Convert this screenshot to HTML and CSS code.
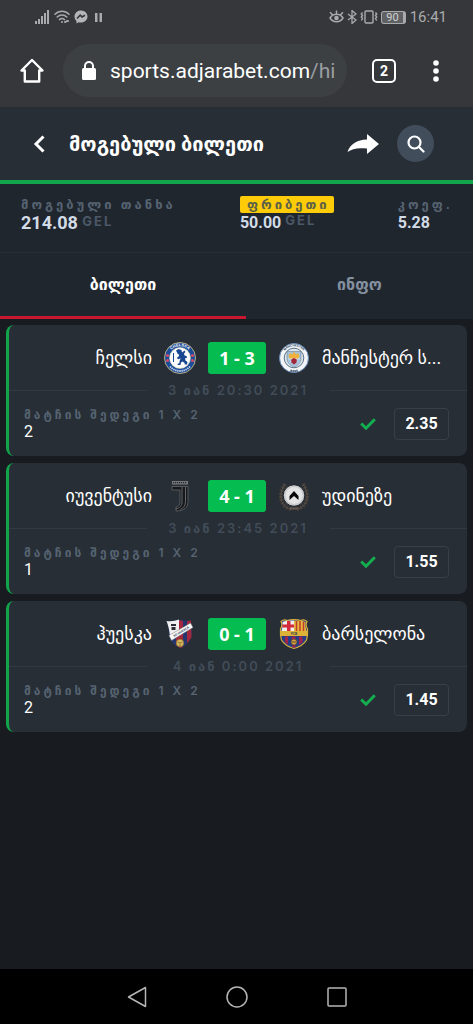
FILE: index.html
```html
<!DOCTYPE html>
<html lang="ka">
<head>
    <meta charset="UTF-8">
    <meta name="viewport" content="width=device-width, initial-scale=1.0">
    <title>მოგებული ბილეთი</title>
    <link rel="stylesheet" href="styles.css">
</head>
<body>
    <div class="status-bar">
        <div class="status-icons">
            <svg width="15" height="14" viewBox="0 0 15 14" fill="#a9aaac">
                <path d="M0 11h2v3H0zM3 9h2v5H3zM6 6h2v8H6zM9 3h2v11H9zM12 0h2v14h-2z"/>
            </svg>
            <svg width="16" height="14" viewBox="0 0 16 14" fill="none" stroke="#a9aaac" stroke-width="1.5" stroke-linecap="round">
                <path d="M1 4.2C5 .2 11 .2 15 4.2M3.200 7C6 4.200 10 4.200 12.800 7M5.500 9.600C7 8.200 9 8.200 10.500 9.600"/>
                <circle cx="8" cy="12" r="1" fill="#a9aaac" stroke="none"/>
                <path d="M11 12h.5M13 11h1" stroke-width="2"/>
            </svg>
            <svg width="14" height="14" viewBox="0 0 14 14">
                <path d="M7 .5C3.200 .5.500 3.200.500 6.600c0 1.800.8 3.400 2 4.500v2.400l2.200-1.200c.7.200 1.500.3 2.300.3 3.800 0 6.500-2.700 6.500-6S10.800.500 7 .500z" fill="#b4b5b7"/>
                <path d="M3 8.500l3.200-3.300 1.900 1.700L11 5.200" fill="none" stroke="#36373b" stroke-width="1.6"/>
            </svg>
            <svg width="16" height="14" viewBox="0 0 16 14" fill="#a9aaac">
                <path d="M3 3h2.500v9H3zM7.500 3H10v9H7.500z"/>
            </svg>
        </div>
        <div class="status-icons status-right">
            <svg width="15" height="14" viewBox="0 0 15 14" fill="none" stroke="#a9aaac" stroke-width="1.500">
                <path d="M1 8c3-5 10-5 13 0-3 5-10 5-13 0zM7.500 4V.5M3.500 4.800L1 2.200M11.500 4.800L14 2.200"/>
                <circle cx="7.500" cy="8" r="2.300" fill="#a9aaac" stroke="none"/>
            </svg>
            <svg width="10" height="14" viewBox="0 0 10 14" fill="none" stroke="#a9aaac" stroke-width="1.300">
                <path d="M1 4l8 6-4 3.500V.5L9 4l-8 6"/>
            </svg>
            <svg width="18" height="14" viewBox="0 0 18 14" fill="none" stroke="#a9aaac" stroke-width="1.400">
                <rect x="5" y="1" width="8" height="12" rx="1"/>
                <path d="M2.500 2.500l-1.200 1.500 1.200 1.500-1.200 1.500 1.200 1.500-1.200 2M15.500 2.500l1.200 1.500-1.200 1.500 1.200 1.500-1.200 1.500 1.200 2"/>
            </svg>
            <span class="battery">90</span>
            <span class="clock">16:41</span>
        </div>
    </div>

    <div class="browser-bar">
        <button class="icon-button" aria-label="Home">
            <svg width="26" height="26" viewBox="0 0 26 26" fill="none" stroke="#fff" stroke-width="2.400" stroke-linejoin="round" stroke-linecap="round">
                <path d="M2.500 12.500L13 2l10.500 10.500h-3.300V23.500H5.800V12.500z"/>
            </svg>
        </button>
        <button class="address">
            <svg width="16" height="20" viewBox="0 0 16 20">
                <rect x="1" y="7" width="14" height="12" rx="1.500" fill="#fff"/>
                <path d="M4 8V5a4 4 0 0 1 8 0v3" fill="none" stroke="#fff" stroke-width="2"/>
            </svg>
            <span class="url">sports.adjarabet.com<span class="url-path">/hi</span></span>
        </button>
        <button class="tab-count" aria-label="Open tabs">2</button>
        <button class="icon-button" aria-label="More">
            <svg width="8" height="24" viewBox="0 0 8 24" fill="#fff">
                <circle cx="4" cy="4" r="2.800"/>
                <circle cx="4" cy="12" r="2.800"/>
                <circle cx="4" cy="20" r="2.800"/>
            </svg>
        </button>
    </div>

    <header class="header">
        <button class="icon-button" aria-label="Back">
            <svg width="12" height="18" viewBox="0 0 12 18" fill="none" stroke="#fff" stroke-width="3">
                <path d="M10.500 1.500L3 9l7.500 7.500"/>
            </svg>
        </button>
        <h1>მოგებული ბილეთი</h1>
        <button class="icon-button" aria-label="Share">
            <svg width="32" height="20" viewBox="0 0 32 20" fill="#fff">
                <path d="M20 0l12 10-12 10v-5.500C11 13.500 5 14.500 .5 18 3 10 10 6 20 5.500z"/>
            </svg>
        </button>
        <button class="search-button" aria-label="Search">
            <svg width="18" height="18" viewBox="0 0 18 18" fill="none" stroke="#fff" stroke-width="2.200" stroke-linecap="round">
                <circle cx="7.500" cy="7.500" r="6"/>
                <path d="M12 12l4.500 4.500"/>
            </svg>
        </button>
    </header>

    <section class="summary">
        <div class="summary-item">
            <div class="label">მოგებული თანხა</div>
            <div class="amount amount-large">214.08 <span class="currency">GEL</span></div>
        </div>
        <div class="summary-item">
            <div class="label freebet">ფრიბეთი</div>
            <div class="amount">50.00 <span class="currency">GEL</span></div>
        </div>
        <div class="summary-item">
            <div class="label">კოეფ.</div>
            <div class="amount">5.28</div>
        </div>
    </section>

    <nav class="tabs">
        <button class="tab active">ბილეთი</button>
        <button class="tab">ინფო</button>
    </nav>

    <main class="matches">
        <article class="match">
            <div class="teams">
                <span class="team home">ჩელსი</span>
                <svg class="crest" viewBox="0 0 32 32">
                    <path id="ring" d="M4.200 16a11.800 11.800 0 0 1 23.600 0" fill="none"/>
                    <circle cx="16" cy="16" r="15.500" fill="#1b4c9a" stroke="#b8ad86"/>
                    <circle cx="16" cy="16" r="10.500" fill="#fff" stroke="#c8c8b0" stroke-width=".6"/>
                    <text class="crest-text"><textPath href="#ring" startOffset="50%">CHELSEA</textPath></text>
                    <circle cx="3.500" cy="13.500" r="1.500" fill="#d84a68"/>
                    <circle cx="3.500" cy="18.500" r="1.500" fill="#d84a68"/>
                    <circle cx="28.500" cy="13.500" r="1.500" fill="#d84a68"/>
                    <circle cx="28.500" cy="18.500" r="1.500" fill="#d84a68"/>
                    <path d="M6 24.500c5.500 6 14.500 6 20 0" fill="none" stroke="#c9d5ea" stroke-width="1.800" stroke-dasharray="1.400 .7"/>
                    <path d="M12 8.500l2.500-1.500 3 1 .5 2.500 2.500-2 1 1.500-1.500 1.500.5 2 2 .5.500 2-2 .3.500 2.200 2 1.500-.5 2.500h-2.500l.3-1.300-2-1.700-1.800 1-.5 2.500h-3l.3-1.300 1.500-.5.500-3 1-2-2.500 1-1.500-1.300 2-1.600.5-1.600-1.500-.6z" fill="#17458f"/>
                    <path d="M9.500 20V11" stroke="#17458f"/>
                </svg>
                <span class="score">1 - 3</span>
                <svg class="crest" viewBox="0 0 32 32">
                    <circle cx="16" cy="16" r="14.500" fill="#f2f4f6" stroke="#6489b5"/>
                    <text class="crest-text crest-text-dark"><textPath href="#ring" startOffset="50%">MANCHESTER</textPath></text>
                    <circle cx="16" cy="16" r="9.800" fill="#dfe7ec" stroke="#38536f" stroke-width=".8"/>
                    <path d="M9 9.500h14v7c0 4-3 7-7 8.500-4-1.500-7-4.500-7-8.500z" fill="#a4c3dc" stroke="#6a7f90" stroke-width=".6"/>
                    <path d="M10.500 13l2-2 1.500 1.500 2-3 2 3 1.500-1.500 2 2-1 4h-9z" fill="#efb23d"/>
                    <path d="M10 17h12M12 20h8" stroke="#d6e1e9"/>
                    <path d="M16 16l2.700 1.500v3L16 22.500l-2.700-2v-3z" fill="#a32539"/>
                    <path d="M12.500 28.500c2.500.7 4.500.7 7 0" fill="none" stroke="#33475e" stroke-width="2" stroke-dasharray="1.300 .7"/>
                </svg>
                <span class="team away">მანჩესტერ ს...</span>
            </div>
            <div class="date">3 იან 20:30 2021</div>
            <div class="market">
                <div class="pick">
                    <div class="label">მატჩის შედეგი 1 X 2</div>
                    <div class="outcome">2</div>
                </div>
                <svg class="check" viewBox="0 0 16 12"><path d="M1.200 5.500L6 10.200 14.800 1.200"/></svg>
                <span class="odds">2.35</span>
            </div>
        </article>

        <article class="match">
            <div class="teams">
                <span class="team home">იუვენტუსი</span>
                <svg class="crest" viewBox="0 0 32 32">
                    <path d="M8 1h16v3.500H8z" fill="#777a7d"/>
                    <path d="M9 2.700h14" stroke="#22262b" stroke-width="1.200" stroke-dasharray="1.200 .8"/>
                    <path d="M8 6.500h16v15c0 6-4 9.500-12 9.500v-4c2.500-.5 4-2 4-5V10H8z" fill="#17191c" stroke="#63676b" stroke-width=".8"/>
                    <path d="M18 7v15c0 3.500-2 6-6 7M21.500 7v14.500c0 4-2 6.500-5 8" fill="none" stroke="#777a7d" stroke-width=".8"/>
                </svg>
                <span class="score">4 - 1</span>
                <svg class="crest" viewBox="0 0 32 32">
                    <path d="M13 29C2 27 0 14 7 4M19 29C30 27 32 14 25 4" fill="none" stroke="#443e39" stroke-width="4" stroke-dasharray="2 1.200"/>
                    <path d="M13 29C2 27 0 14 7 4M19 29C30 27 32 14 25 4" fill="none" stroke="#655a4f" stroke-width=".7"/>
                    <circle cx="16" cy="15.500" r="10.800" fill="#c9cacc" stroke="#1b1e22"/>
                    <circle cx="16" cy="15.500" r="8.500" fill="#e4e4e5"/>
                    <path d="M16 11l4.500 5v4l-4.500-4-4.500 4v-4z" fill="#08090a"/>
                    <path d="M12 28.500h8" stroke="#675b50" stroke-width="2"/>
                </svg>
                <span class="team away">უდინეზე</span>
            </div>
            <div class="date">3 იან 23:45 2021</div>
            <div class="market">
                <div class="pick">
                    <div class="label">მატჩის შედეგი 1 X 2</div>
                    <div class="outcome">1</div>
                </div>
                <svg class="check" viewBox="0 0 16 12"><path d="M1.200 5.500L6 10.200 14.800 1.200"/></svg>
                <span class="odds">1.55</span>
            </div>
        </article>

        <article class="match">
            <div class="teams">
                <span class="team home">ჰუესკა</span>
                <svg class="crest" viewBox="0 0 32 32">
                    <path d="M2.500 3Q9 4 15 1.500 21 3 27 2.500 26 8 28 14 28 24 17 30.500 6 26 5 17 5 9 2.500 3z" fill="#24366d"/>
                    <path d="M15 2l4 1v26l-3 1-4-3V16l3-3zM23 3l4-.5.5 17-4.500 6z" fill="#a3283e"/>
                    <path d="M2.500 3Q9 4 15 1.500V13L6 18Q5 9 2.500 3z" fill="#f0eff0"/>
                    <path d="M7 6h5v2H7zM7.500 9h4v3h-4z" fill="#2d2d38"/>
                    <path d="M5 17.500L26.500 5l2.500 4.500-21.500 13z" fill="#fafafa" stroke="#777" stroke-width=".5"/>
                    <path id="sash" d="M8 20.300L27.500 8.700" fill="none"/>
                    <text class="crest-text crest-text-dark"><textPath href="#sash" startOffset="50%">SD HUESCA</textPath></text>
                    <circle cx="16" cy="25" r="3.800" fill="#d8b95e" stroke="#78612b" stroke-width=".6"/>
                    <path d="M13.500 24l2.500 1 2.500-1M16 25v3" fill="none" stroke="#78612b" stroke-width=".7"/>
                </svg>
                <span class="score">0 - 1</span>
                <svg class="crest" viewBox="0 0 32 32">
                    <path d="M3 3.500Q6 1 9 2.500 12 1.500 16 1.500T23 2.500Q26 1 29 3.500 27 7 29.500 11 30 17 28.500 22 25 28 16 30.500 7 28 3.500 22 2 17 2.500 11 5 7 3 3.500z" fill="#253c86" stroke="#d9b13c" stroke-width="1.200"/>
                    <path d="M4.500 4q3-2 11.500-1.500V13H3.500q2-5 1-9z" fill="#f3eeee"/>
                    <path d="M9 3h3.500v10H9zM4.500 6.500H16V9.500H4.500z" fill="#d22c3c"/>
                    <path d="M16 2.500q8-.5 11.500 1.500-1 4 1 9H16z" fill="#e8b63d"/>
                    <path d="M18.500 3v10M22 3v10M25.500 4v9" stroke="#bd3d2f" stroke-width="1.500"/>
                    <path d="M7 18.500h3v8l-3-2zM13.500 18.500h4v11h-3zM21 18.500h3.500v6L21 27z" fill="#9f234b"/>
                    <path d="M2.500 13h27v5h-27z" fill="#dcb337"/>
                    <text class="crest-text crest-text-dark" x="16" y="17.200">FCB</text>
                    <circle cx="16" cy="24" r="3" fill="#d9a441" stroke="#463d35" stroke-width=".7"/>
                    <path d="M14 23l4 2M14 25l4-2" stroke="#73502d" stroke-width=".7"/>
                </svg>
                <span class="team away">ბარსელონა</span>
            </div>
            <div class="date">4 იან 0:00 2021</div>
            <div class="market">
                <div class="pick">
                    <div class="label">მატჩის შედეგი 1 X 2</div>
                    <div class="outcome">2</div>
                </div>
                <svg class="check" viewBox="0 0 16 12"><path d="M1.200 5.500L6 10.200 14.800 1.200"/></svg>
                <span class="odds">1.45</span>
            </div>
        </article>
    </main>

    <nav class="system-nav">
        <button class="icon-button" aria-label="Back">
            <svg width="22" height="24" viewBox="0 0 22 24"><path d="M19.500 2.500v19L2.500 12z"/></svg>
        </button>
        <button class="icon-button" aria-label="Home">
            <svg width="22" height="24" viewBox="0 0 22 24"><circle cx="11" cy="12" r="10"/></svg>
        </button>
        <button class="icon-button" aria-label="Recent apps">
            <svg width="22" height="24" viewBox="0 0 22 24"><rect x="2" y="3" width="18" height="18" rx="1"/></svg>
        </button>
    </nav>
</body>
</html>
```

FILE: styles.css
```css
* {
    box-sizing: border-box;
}
body {
    margin: 0;
    min-height: 100vh;
    display: flex;
    flex-direction: column;
    background-color: #181b20;
    color: #fff;
    font-family: Roboto, "DejaVu Sans", sans-serif;
}
button {
    padding: 0;
    border: 0;
    background: none;
    color: inherit;
    font-family: inherit;
    cursor: pointer;
}
svg {
    display: block;
    flex-shrink: 0;
}

/* phone and browser bars */
.status-bar {
    display: flex;
    justify-content: space-between;
    align-items: center;
    height: 34px;
    padding: 0 26px 0 35px;
    background: #36373b;
    color: #a9aaac;
}
.status-icons {
    display: flex;
    align-items: center;
    gap: 4px;
}
.status-right {
    gap: 3px;
}
.battery {
    padding: 0 4px;
    border: 1px solid #a9aaac;
    border-right-width: 3px;
    border-radius: 3px;
    background: #606164;
    color: #d0d1d3;
    font-size: 11px;
    line-height: 11px;
}
.clock {
    margin-left: 1px;
    font-size: 15px;
}
.browser-bar {
    display: flex;
    align-items: center;
    height: 73px;
    padding: 0 33px 0 19px;
    background: #36373b;
}
.address {
    flex: 1;
    display: flex;
    align-items: center;
    gap: 13px;
    height: 53px;
    margin: 0 25px 0 18px;
    padding: 0 8px 0 18px;
    border-radius: 27px;
    background: #3c4043;
    min-width: 0;
    text-align: left;
}
.url {
    overflow: hidden;
    white-space: nowrap;
    font-size: 21px;
}
.url-path {
    color: #9a9da1;
}
.tab-count {
    width: 24px;
    height: 24px;
    margin-right: 36px;
    border: 2px solid #fff;
    border-radius: 5px;
    font-size: 14px;
    font-weight: bold;
}

/* ticket header */
.header {
    display: flex;
    align-items: center;
    height: 77px;
    padding: 0 39px 0 33px;
    background: #272e36;
    border-bottom: 4px solid #12a44b;
}
h1 {
    flex: 1;
    margin: 0 0 0 24px;
    font-size: 20px;
    line-height: 24px;
    white-space: nowrap;
}
.search-button {
    display: flex;
    justify-content: center;
    align-items: center;
    width: 37px;
    height: 37px;
    margin-left: 18px;
    border-radius: 50%;
    background: #414d5b;
}
.summary {
    display: flex;
    justify-content: space-between;
    height: 69px;
    padding: 12px 20px 0 21px;
    background: #20262e;
    border-bottom: 1px solid #292f37;
}
.label {
    color: #566372;
    font-family: Inter, "DejaVu Sans", sans-serif;
    font-size: 12px;
    font-weight: 600;
    line-height: 17px;
    letter-spacing: 3px;
    white-space: nowrap;
}
.summary .label {
    font-size: 13px;
}
.summary .freebet {
    padding: 0 4px 0 7px;
    border-radius: 2px;
    background: #fdcb08;
    color: #596048;
}
.amount {
    color: #d3dce6;
    font-size: 16px;
    font-weight: bold;
    line-height: 20px;
}
.amount-large {
    font-size: 18px;
}
.currency {
    color: #4b5867;
    font-family: Inter, sans-serif;
    font-size: 13px;
    letter-spacing: 2px;
    vertical-align: 3px;
    line-height: 12px;
}
.tabs {
    display: flex;
    background: #20262e;
}
.tab {
    flex: 1;
    height: 66px;
    border-bottom: 3px solid transparent;
    color: #8390a0;
    font-size: 16px;
    font-weight: bold;
}
.tab.active {
    flex: 0 0 52%;
    border-bottom-color: #c91631;
    color: #fff;
}

/* matches */
.matches {
    flex: 1;
    display: flex;
    flex-direction: column;
    gap: 7px;
    padding: 6px;
}
.match {
    padding: 17px 0 15px;
    border-left: 3px solid #12a44b;
    border-radius: 8px;
    background: #272e35;
}
.teams {
    display: grid;
    grid-template-columns: 1fr 32px 58px 32px 1fr;
    align-items: center;
    gap: 12px;
    padding: 0 20px 0 18px;
}
.team {
    white-space: nowrap;
    font-size: 18px;
    line-height: 24px;
}
.home {
    text-align: right;
}
.crest {
    width: 32px;
    height: 32px;
}
.crest-text {
    fill: #fff;
    font-family: "Liberation Sans", sans-serif;
    font-size: 4px;
    font-weight: bold;
    text-anchor: middle;
}
.crest-text-dark {
    fill: #263a55;
    font-size: 3px;
}
.score {
    border-radius: 3px;
    background: #05bc50;
    font-family: "Noto Sans", sans-serif;
    font-size: 18px;
    font-weight: bold;
    line-height: 32px;
    text-align: center;
}
.date {
    display: grid;
    grid-template-columns: 1fr 183px 1fr;
    align-items: center;
    margin-top: 8px;
    color: #414c58;
    font-family: Inter, "DejaVu Sans", sans-serif;
    font-size: 13px;
    font-weight: 600;
    line-height: 16px;
    letter-spacing: 2px;
    text-align: center;
    white-space: nowrap;
}
.date::before, .date::after {
    content: "";
    border-top: 1px solid #313943;
}
.market {
    display: flex;
    align-items: center;
    margin-top: 8px;
    padding: 0 18px 0 15px;
}
.pick {
    flex: 1;
}
.outcome {
    font-size: 16px;
    line-height: 18px;
}
.check {
    width: 16px;
    height: 12px;
    margin-right: 18px;
    fill: none;
    stroke: #14ad50;
    stroke-width: 3;
}
.odds {
    width: 55px;
    border: 1px solid #37404a;
    border-radius: 4px;
    font-size: 16px;
    font-weight: bold;
    line-height: 30px;
    text-align: center;
}

.system-nav {
    display: flex;
    justify-content: center;
    align-items: center;
    gap: 78px;
    height: 55px;
    background: #000;
}
.system-nav svg {
    fill: none;
    stroke: #b5b5b5;
    stroke-width: 1.5;
    stroke-linejoin: round;
}
```
